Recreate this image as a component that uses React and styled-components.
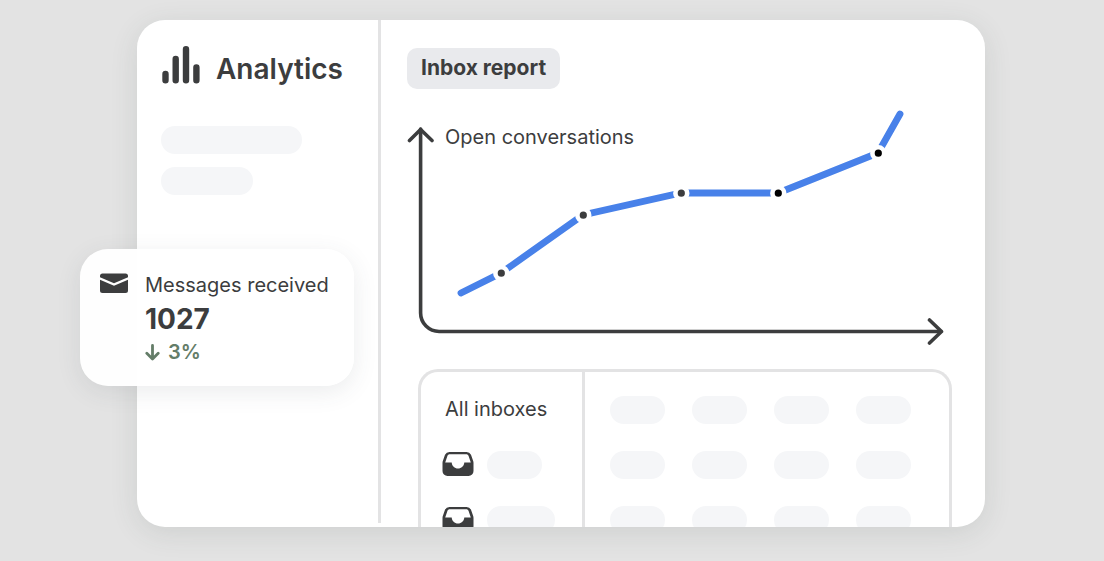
import React from "react"
import styled, { createGlobalStyle } from "styled-components"

const GlobalStyle = createGlobalStyle`
  * {
    box-sizing: border-box;
  }
  body {
    margin: 0;
    background: #e3e3e3;
    color: #3c3d3e;
    font-family: Inter, "Liberation Sans", sans-serif;
  }
  h1, h2, p, figure {
    margin: 0;
  }
`

// Points of the chart line, in the coordinates of the chart drawing
const points = [
  { x: 54, y: 186 },
  { x: 94, y: 166, color: "#3c3d3e" },
  { x: 176, y: 108, color: "#3c3d3e" },
  { x: 274, y: 86, color: "#3c3d3e" },
  { x: 371, y: 86, color: "#000" },
  { x: 471, y: 46, color: "#000" },
  { x: 493, y: 7 },
]

// Width of the placeholder next to each inbox icon
const inboxes = [55, 68]

function BarsIcon() {
  return (
    <svg width="38" height="38" viewBox="0 0 38 38" aria-hidden="true">
      <path
        d="M3.500 28v6.300M13.700 13v21.300M24 3.300v31M34.400 21.500v12.800"
        fill="none"
        stroke="#3c3d3e"
        strokeWidth="6.400"
        strokeLinecap="round"
      />
    </svg>
  )
}

function MailIcon() {
  return (
    <svg width="28" height="20" viewBox="0 0 28 20" aria-hidden="true">
      <path d="M2.500 0.500h23A2.500 2.500 0 0 1 28 3v1.200L14 10.200 0 4.200V3A2.500 2.500 0 0 1 2.500 0.500z" fill="#3c3d3e" />
      <path d="M0 6.800l14 6 14-6v10.700a2.500 2.500 0 0 1-2.500 2.500h-23A2.500 2.500 0 0 1 0 17.500z" fill="#3c3d3e" />
    </svg>
  )
}

function DownIcon() {
  return (
    <svg width="15" height="17" viewBox="0 0 15 17" aria-hidden="true">
      <path
        d="M7.500 1.500v13.500M1.800 9.300l5.700 5.700 5.700-5.700"
        fill="none"
        stroke="#647d68"
        strokeWidth="2.800"
        strokeLinecap="round"
        strokeLinejoin="round"
      />
    </svg>
  )
}

function InboxIcon() {
  return (
    <svg width="32" height="26" viewBox="0 0 32 26" aria-hidden="true">
      <path
        fillRule="evenodd"
        fill="#3c3d3e"
        d="M7.500 0h17a5 5 0 0 1 4.500 2.800l2 5.700c.4 1 .5 1.700.5 2.500v8a5 5 0 0 1-5 5h-21a5 5 0 0 1-5-5v-8c0-.8.1-1.500.5-2.500l2-5.700A5 5 0 0 1 7.500 0zM8 2.200C6.600 2.200 5.800 2.800 5.400 3.900L3.200 10.500H9.700c.3 3.500 2.900 6 6.300 6s6-2.500 6.300-6h6.500L26.600 3.900C26.200 2.800 25.400 2.200 24 2.200z"
      />
    </svg>
  )
}

function ChartDrawing() {
  return (
    <ChartSvg viewBox="0 0 545 238" role="img" aria-label="Open conversations">
      <g fill="none" stroke="#3c3d3e" strokeWidth="3.600" strokeLinecap="round" strokeLinejoin="round">
        <path d="M13.600 22v184a18.500 18.500 0 0 0 18.500 18.500H534" />
        <path d="M2.500 33.500L13.600 22.500 25 33.500" />
        <path d="M522.500 213l12 11.500-12 11.500" />
      </g>
      <polyline
        points={points.map((p) => `${p.x},${p.y}`).join(" ")}
        fill="none"
        stroke="#4881e9"
        strokeWidth="6.800"
        strokeLinecap="round"
      />
      {points.filter((p) => p.color).map((p) => (
        <circle key={p.x} cx={p.x + 0.3} cy={p.y + 0.2} r="5.900" fill={p.color} stroke="#fff" strokeWidth="4.600" />
      ))}
    </ChartSvg>
  )
}

export default function App() {
  return (
    <Page>
      <GlobalStyle />
      <Window>
        <Sidebar>
          <Brand>
            <BarsIcon />
            <BrandName>Analytics</BrandName>
          </Brand>
          <Placeholder $width={141} />
          <Placeholder $width={92} />
        </Sidebar>
        <Main>
          <ReportTag>Inbox report</ReportTag>
          <Chart>
            <ChartDrawing />
            <ChartLabel>Open conversations</ChartLabel>
          </Chart>
          <TableFrame>
            <Table>
              <thead>
                <tr>
                  <HeadCell scope="col">All inboxes</HeadCell>
                  {[0, 1, 2, 3].map((i) => (
                    <Cell key={i} $head><Placeholder $width={55} /></Cell>
                  ))}
                </tr>
              </thead>
              <tbody>
                {inboxes.map((width) => (
                  <tr key={width}>
                    <InboxCell>
                      <InboxName>
                        <InboxIcon />
                        <Placeholder $width={width} />
                      </InboxName>
                    </InboxCell>
                    {[0, 1, 2, 3].map((i) => (
                      <Cell key={i}><Placeholder $width={55} /></Cell>
                    ))}
                  </tr>
                ))}
              </tbody>
            </Table>
          </TableFrame>
        </Main>
      </Window>
      <StatCard>
        <MailIcon />
        <div>
          <StatLabel>Messages received</StatLabel>
          <StatValue>1027</StatValue>
          <StatChange>
            <DownIcon />
            3%
          </StatChange>
        </div>
      </StatCard>
    </Page>
  )
}

const Page = styled.div`
  position: relative;
  display: flex;
  height: 100vh;
  padding: 20px 119px 34px 137px;
`

const Window = styled.div`
  display: flex;
  flex: 1;
  min-width: 0;
  overflow: hidden;
  border-radius: 28px;
  background: #fff;
  box-shadow: 0 6px 28px rgba(60, 70, 65, 0.12);
`

const Sidebar = styled.aside`
  display: flex;
  flex-direction: column;
  gap: 13px;
  flex: none;
  width: 244px;
  margin-bottom: 4px;
  padding: 26px 24px;
  border-right: 3px solid #e3e3e4;
`

const Brand = styled.div`
  display: flex;
  align-items: center;
  gap: 16px;
  margin-bottom: 29px;
  padding-left: 1px;
`

const BrandName = styled.h1`
  padding-top: 8px;
  font-size: 28px;
  line-height: 30px;
  font-weight: 600;
`

const Placeholder = styled.div`
  width: ${({ $width }) => $width}px;
  height: 28px;
  border-radius: 14px;
  background: #f5f6f8;
`

const Main = styled.main`
  flex: 1;
  min-width: 0;
  padding: 28px 33px 0 26px;
`

const ReportTag = styled.h2`
  width: fit-content;
  padding: 6px 14px 7px;
  border-radius: 10px;
  background: #e9eaed;
  font-size: 21px;
  line-height: 28px;
  font-weight: 700;
`

const Chart = styled.figure`
  position: relative;
  margin-top: 18px;
`

const ChartSvg = styled.svg`
  display: block;
  width: 100%;
  height: auto;
`

const ChartLabel = styled.figcaption`
  position: absolute;
  top: 16px;
  left: 38px;
  font-size: 20px;
  line-height: 28px;
`

const TableFrame = styled.div`
  margin: 24px 0 0 11px;
  overflow: hidden;
  border: 3px solid #e3e3e4;
  border-bottom: 0;
  border-radius: 20px 20px 0 0;
`

const Table = styled.table`
  width: 100%;
  table-layout: fixed;
  border-spacing: 0;
`

const HeadCell = styled.th`
  width: 164px;
  height: 65px;
  padding: 8px 0 0 24px;
  border-right: 3px solid #e3e3e4;
  font-size: 20px;
  line-height: 28px;
  font-weight: 400;
  text-align: left;
`

const Cell = styled.td`
  width: 82px;
  height: ${({ $head }) => ($head ? 65 : 55)}px;
  padding: ${({ $head }) => ($head ? 10 : 0)}px 0 0;

  &:nth-child(2) {
    width: 107px;
    padding-left: 25px;
  }
  &:last-child {
    width: auto;
  }
`

const InboxCell = styled.td`
  padding: 0 0 0 21px;
  border-right: 3px solid #e3e3e4;
`

const InboxName = styled.div`
  display: flex;
  align-items: center;
  gap: 13px;
`

const StatCard = styled.section`
  position: absolute;
  top: 249px;
  left: 80px;
  display: flex;
  gap: 17px;
  padding: 22px 25px 20px 20px;
  border-radius: 28px;
  background: rgba(255, 255, 255, 0.97);
  box-shadow: 0 6px 24px rgba(60, 65, 80, 0.1);

  > svg {
    margin-top: 2px;
  }
`

const StatLabel = styled.p`
  font-size: 20px;
  line-height: 28px;
`

const StatValue = styled.p`
  font-size: 28px;
  line-height: 40px;
  font-weight: 700;
`

const StatChange = styled.p`
  display: flex;
  align-items: center;
  gap: 8px;
  color: #647d68;
  font-size: 20px;
  line-height: 27px;
  font-weight: 600;
`
